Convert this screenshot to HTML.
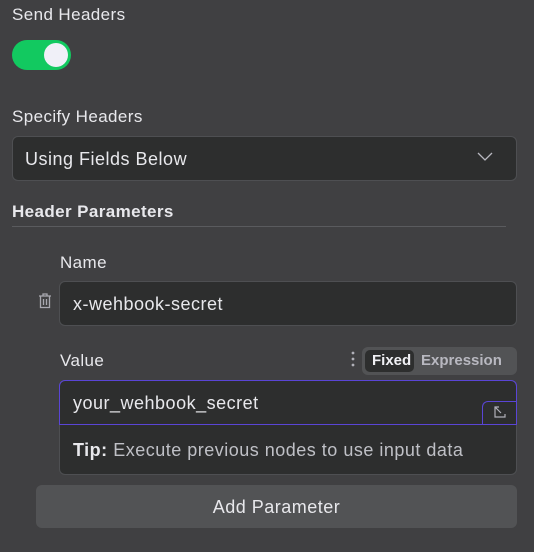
<html><head><style>
body{margin:0;width:534px;height:552px;background:#404042;font-family:"Liberation Sans",sans-serif;color:#e8e8ec;position:relative;overflow:hidden}
.a{position:absolute}
.lbl{font-size:17px;line-height:20px;letter-spacing:0.4px}
.inp{font-size:18px;line-height:20px;letter-spacing:0.5px}
</style></head><body>
<div class="a lbl" style="left:12px;top:5px">Send Headers</div>
<div class="a" style="left:12px;top:40px;width:59px;height:30px;border-radius:15px;background:#12c960"></div>
<div class="a" style="left:44px;top:43px;width:24px;height:24px;border-radius:12px;background:#f0f0f8"></div>
<div class="a lbl" style="left:12px;top:107px">Specify Headers</div>
<div class="a" style="left:12px;top:136px;width:503px;height:43px;border:1px solid #4e4f52;border-radius:6px;background:#2d2e2e"></div>
<div class="a inp" style="left:25px;top:149px">Using Fields Below</div>
<svg class="a" style="left:476px;top:150px" width="18" height="12"><path d="M2 3l7 7 7-7" stroke="#b8b8c0" stroke-width="1.3" fill="none"/></svg>
<div class="a lbl" style="left:12px;top:202px;font-weight:bold">Header Parameters</div>
<div class="a" style="left:12px;top:226px;width:494px;height:1px;background:#5a5b5e"></div>
<div class="a lbl" style="left:60px;top:253px">Name</div>
<svg class="a" style="left:37px;top:292px" width="16" height="18"><path d="M2 4h12M6 4V2h4v2M3.5 4v11.5h9V4M6.5 7v6M9.5 7v6" stroke="#a8a8b0" stroke-width="1.3" fill="none"/></svg>
<div class="a" style="left:59px;top:281px;width:456px;height:43px;border:1px solid #4e4f52;border-radius:6px;background:#2d2e2e"></div>
<div class="a inp" style="left:73px;top:294px">x-wehbook-secret</div>
<div class="a lbl" style="left:60px;top:351px">Value</div>
<svg class="a" style="left:350px;top:351px" width="6" height="16"><circle cx="3" cy="2" r="1.4" fill="#b0b0b8"/><circle cx="3" cy="8" r="1.4" fill="#b0b0b8"/><circle cx="3" cy="14" r="1.4" fill="#b0b0b8"/></svg>
<div class="a" style="left:362px;top:347px;width:155px;height:28px;border-radius:6px;background:#525355"></div>
<div class="a" style="left:365px;top:350px;width:49px;height:22px;border-radius:5px;background:#2d2e2e"></div>
<div class="a" style="left:372px;top:351px;font-size:15px;line-height:20px;font-weight:bold;color:#f0f0f4">Fixed</div>
<div class="a" style="left:421px;top:351px;font-size:15px;line-height:20px;font-weight:bold;color:#b8b8c0">Expression</div>
<div class="a" style="left:59px;top:380px;width:456px;height:93px;border:1px solid #4e4f52;border-radius:6px;background:#2d2e2e"></div>
<div class="a" style="left:59px;top:380px;width:456px;height:43px;border:1px solid #5a45d6;border-radius:6px 6px 0 0"></div>
<div class="a" style="left:482px;top:401px;width:34px;height:23px;border-left:1px solid #5a45d6;border-top:1px solid #5a45d6;border-radius:6px 0 0 0"></div>
<svg class="a" style="left:490px;top:403px" width="18" height="18"><path d="M8 4H5v10h10v-3M5 4l6 6M5 4v4M5 4h4" stroke="#b0b0b8" stroke-width="1.2" fill="none"/></svg>
<div class="a inp" style="left:73px;top:393px">your_wehbook_secret</div>
<div class="a inp" style="left:73px;top:440px"><b>Tip:</b> <span style="color:#bfc0c6">Execute previous nodes to use input data</span></div>
<div class="a" style="left:36px;top:485px;width:481px;height:43px;border-radius:6px;background:#525355"></div>
<div class="a inp" style="left:36px;top:497px;width:481px;text-align:center">Add Parameter</div>
</body></html>
